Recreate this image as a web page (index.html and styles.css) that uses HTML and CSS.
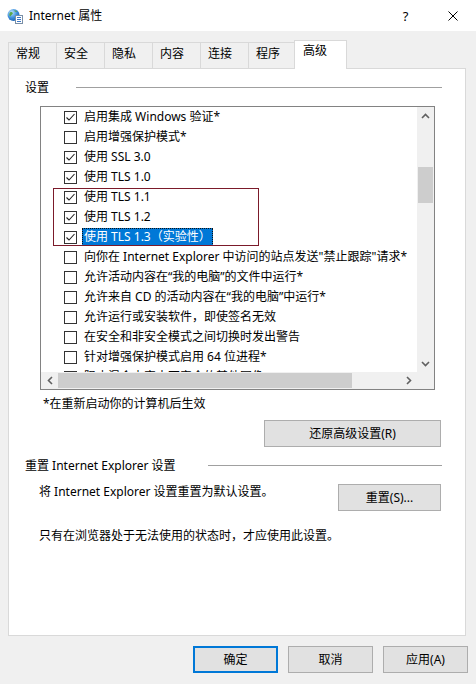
FILE: index.html
```html
<!DOCTYPE html>
<html lang="zh-CN">
<head>
<meta charset="utf-8">
<title>Internet 属性</title>
<link rel="stylesheet" href="styles.css">
</head>
<body>
<div class="window">
  <div class="titlebar">
    <svg class="app-icon" viewBox="0 0 16 16" width="16" height="16">
      <defs>
        <radialGradient id="g" cx="0.35" cy="0.3" r="0.8">
          <stop offset="0" stop-color="#bfe6ff"/>
          <stop offset="0.55" stop-color="#3d8fdc"/>
          <stop offset="1" stop-color="#1a5aa8"/>
        </radialGradient>
      </defs>
      <circle cx="6.5" cy="7" r="6" fill="url(#g)"/>
      <path d="M3 4.5c1.2-.8 2.4-.4 2.8.6.3.9-.6 1.4-1.3 1.9-.6.4-.5 1.4-1.4 1.3C2.3 8.1 1.8 6 3 4.5z" fill="#5aa84a"/>
      <path d="M7.5 2.2c1 .1 2.2.7 2.6 1.6-.6.4-1.6.2-2.1-.3-.4-.4-.8-.8-.5-1.3z" fill="#5aa84a"/>
      <rect x="8.5" y="7.5" width="7" height="8" fill="#fff" stroke="#7a8fa6" stroke-width="1"/>
      <path d="M10 9.5h4M10 11.5h4M10 13.5h4" stroke="#3c78c8" stroke-width="1"/>
    </svg>
    <span class="title">Internet 属性</span>
    <div class="caption-btns">
      <div class="cap-btn help">?</div>
      <div class="cap-btn close">
        <svg viewBox="0 0 10 10" width="10" height="10"><path d="M0.5 0.5L9.5 9.5M9.5 0.5L0.5 9.5" stroke="#000" stroke-width="1"/></svg>
      </div>
    </div>
  </div>

  <div class="tabs">
    <div class="tab">常规</div>
    <div class="tab">安全</div>
    <div class="tab">隐私</div>
    <div class="tab">内容</div>
    <div class="tab">连接</div>
    <div class="tab">程序</div>
    <div class="tab active">高级</div>
  </div>

  <div class="panel">
    <div class="group-head">
      <span>设置</span>
      <i class="rule rule-settings"></i>
    </div>

    <div class="listbox">
      <div class="list-view">
        <div class="item"><span class="cb"><svg viewBox="0 0 11 11" width="11" height="11"><path d="M1.5 5.5L4 8L9.5 2" fill="none" stroke="#222" stroke-width="1.1"/></svg></span><span class="label">启用集成 Windows 验证*</span></div>
        <div class="item"><span class="cb"></span><span class="label">启用增强保护模式*</span></div>
        <div class="item"><span class="cb"><svg viewBox="0 0 11 11" width="11" height="11"><path d="M1.5 5.5L4 8L9.5 2" fill="none" stroke="#222" stroke-width="1.1"/></svg></span><span class="label">使用 SSL 3.0</span></div>
        <div class="item"><span class="cb"><svg viewBox="0 0 11 11" width="11" height="11"><path d="M1.5 5.5L4 8L9.5 2" fill="none" stroke="#222" stroke-width="1.1"/></svg></span><span class="label">使用 TLS 1.0</span></div>
        <div class="item"><span class="cb"><svg viewBox="0 0 11 11" width="11" height="11"><path d="M1.5 5.5L4 8L9.5 2" fill="none" stroke="#222" stroke-width="1.1"/></svg></span><span class="label">使用 TLS 1.1</span></div>
        <div class="item"><span class="cb"><svg viewBox="0 0 11 11" width="11" height="11"><path d="M1.5 5.5L4 8L9.5 2" fill="none" stroke="#222" stroke-width="1.1"/></svg></span><span class="label">使用 TLS 1.2</span></div>
        <div class="item"><span class="cb"><svg viewBox="0 0 11 11" width="11" height="11"><path d="M1.5 5.5L4 8L9.5 2" fill="none" stroke="#222" stroke-width="1.1"/></svg></span><span class="label selected">使用 TLS 1.3（实验性）</span></div>
        <div class="item"><span class="cb"></span><span class="label">向你在 Internet Explorer 中访问的站点发送"禁止跟踪"请求*</span></div>
        <div class="item"><span class="cb"></span><span class="label">允许活动内容在“我的电脑”的文件中运行*</span></div>
        <div class="item"><span class="cb"></span><span class="label">允许来自 CD 的活动内容在“我的电脑”中运行*</span></div>
        <div class="item"><span class="cb"></span><span class="label">允许运行或安装软件，即使签名无效</span></div>
        <div class="item"><span class="cb"></span><span class="label">在安全和非安全模式之间切换时发出警告</span></div>
        <div class="item"><span class="cb"></span><span class="label">针对增强保护模式启用 64 位进程*</span></div>
        <div class="item"><span class="cb"></span><span class="label">阻止混合内容中不安全的其他图像</span></div>
        <div class="mark-frame"></div>
      </div>
      <div class="vscroll">
        <div class="arrow"><svg viewBox="0 0 9 6" width="9" height="6"><path d="M1 5L4.5 1.5L8 5" fill="none" stroke="#606060" stroke-width="1.6"/></svg></div>
        <div class="vtrack"><div class="vthumb"></div></div>
        <div class="arrow"><svg viewBox="0 0 9 6" width="9" height="6"><path d="M1 1L4.5 4.5L8 1" fill="none" stroke="#606060" stroke-width="1.6"/></svg></div>
      </div>
      <div class="hscroll">
        <div class="arrow"><svg viewBox="0 0 6 9" width="6" height="9"><path d="M5 1L1.5 4.5L5 8" fill="none" stroke="#606060" stroke-width="1.6"/></svg></div>
        <div class="hthumb"></div>
        <div class="htrack"></div>
        <div class="arrow"><svg viewBox="0 0 6 9" width="6" height="9"><path d="M1 1L4.5 4.5L1 8" fill="none" stroke="#606060" stroke-width="1.6"/></svg></div>
      </div>
      <div class="corner"></div>
    </div>

    <div class="note">*在重新启动你的计算机后生效</div>

    <button class="btn btn-restore">还原高级设置(R)</button>

    <div class="group-head group-reset">
      <span>重置 Internet Explorer 设置</span>
      <i class="rule rule-reset"></i>
    </div>

    <div class="reset-row">
      <span class="desc">将 Internet Explorer 设置重置为默认设置。</span>
      <button class="btn btn-reset">重置(S)...</button>
    </div>

    <div class="desc desc-last">只有在浏览器处于无法使用的状态时，才应使用此设置。</div>
  </div>

  <div class="footer">
    <button class="btn btn-foot default">确定</button>
    <button class="btn btn-foot">取消</button>
    <button class="btn btn-foot">应用(A)</button>
  </div>
</div>
</body>
</html>
```

FILE: styles.css
```css
* { box-sizing: border-box; }

html, body {
  margin: 0;
  padding: 0;
}

body {
  width: 476px;
  height: 684px;
  overflow: hidden;
  background: #f0f0f0;
  color: #000;
  font-family: "Noto Sans", "Noto Sans CJK SC", sans-serif;
  font-size: 12px;
  line-height: 16px;
}

.window {
  width: 476px;
  height: 684px;
  display: flex;
  flex-direction: column;
}

/* title bar */
.titlebar {
  height: 31px;
  flex-shrink: 0;
  background: #fff;
  display: flex;
  align-items: center;
}

.app-icon {
  margin-left: 7px;
  flex-shrink: 0;
}

.title {
  margin-left: 6px;
}

.caption-btns {
  margin-left: auto;
  display: flex;
  height: 31px;
}

.cap-btn {
  width: 46px;
  height: 31px;
  display: flex;
  align-items: center;
  justify-content: center;
}

.help {
  font-size: 13px;
  padding-right: 3px;
}

.close {
  padding-right: 1px;
}

/* tabs */
.tabs {
  margin-top: 9px;
  height: 28px;
  padding-left: 8px;
  display: flex;
  align-items: flex-end;
  flex-shrink: 0;
}

.tab {
  width: 49px;
  height: 26px;
  margin-left: -1px;
  padding: 3px 0 0 7px;
  border: 1px solid #d9d9d9;
  border-bottom: none;
  background: #f0f0f0;
  white-space: nowrap;
}

.tab:first-child {
  margin-left: 0;
}

.tab.active {
  position: relative;
  z-index: 1;
  width: 53px;
  height: 29px;
  margin-left: -3px;
  margin-bottom: -1px;
  padding: 2px 0 0 8px;
  background: #fff;
}

/* panel */
.panel {
  margin-left: 8px;
  width: 458px;
  height: 568px;
  flex-shrink: 0;
  background: #fff;
  border: 1px solid #d9d9d9;
  padding: 0 23px 0 16px;
  display: flex;
  flex-direction: column;
}

.group-head {
  margin-top: 11px;
  height: 16px;
  display: flex;
  align-items: center;
  white-space: nowrap;
}

.rule {
  flex: 1;
  height: 1px;
  background: #a0a0a0;
  margin-top: -1px;
}

.rule-settings { margin-left: 27px; }
.rule-reset { margin-left: 32px; }

/* list box */
.listbox {
  margin-top: 10px;
  margin-left: 15px;
  width: 395px;
  height: 284px;
  border: 1px solid #828282;
  display: grid;
  grid-template-columns: 376px 17px;
  grid-template-rows: 265px 17px;
}

.list-view {
  position: relative;
  overflow: hidden;
}

.item {
  height: 20px;
  display: flex;
  align-items: center;
  white-space: nowrap;
}

.cb {
  width: 13px;
  height: 13px;
  margin-left: 23px;
  flex-shrink: 0;
  border: 1px solid #333;
  background: #fff;
  display: flex;
}

.label {
  margin-left: 5px;
  padding: 0 2px;
  line-height: 18px;
  height: 18px;
}

.label.selected {
  background: #0078d7;
  color: #fff;
  outline: 1px dotted #111;
  outline-offset: -1px;
}

.mark-frame {
  position: absolute;
  left: 12px;
  top: 81px;
  width: 206px;
  height: 58px;
  border: 1px solid #7b1a2a;
  pointer-events: none;
}

.vscroll {
  background: #f0f0f0;
  display: flex;
  flex-direction: column;
}

.vscroll .arrow {
  height: 17px;
}

.arrow {
  flex-shrink: 0;
  display: flex;
  align-items: center;
  justify-content: center;
}

.vtrack {
  flex: 1;
  padding-top: 43px;
}

.vthumb {
  height: 36px;
  margin: 0 1px;
  background: #cdcdcd;
}

.hscroll {
  background: #f0f0f0;
  display: flex;
}

.hscroll .arrow {
  width: 17px;
}

.hthumb {
  width: 294px;
  margin: 1px 0;
  background: #cdcdcd;
}

.htrack {
  flex: 1;
}

.corner {
  background: #f0f0f0;
}

.note {
  margin-top: 6px;
  margin-left: 18px;
}

/* buttons */
.btn {
  font: inherit;
  color: #000;
  background: #e1e1e1;
  border: 1px solid #adadad;
  border-radius: 0;
  padding: 0;
  height: 27px;
  line-height: 16px;
  text-align: center;
}

.btn-restore {
  margin-top: 8px;
  align-self: flex-end;
  margin-right: 1px;
  width: 177px;
}

.group-reset {
  margin-top: 11px;
}

.reset-row {
  margin-top: 10px;
  display: flex;
  align-items: flex-start;
  justify-content: space-between;
}

.desc {
  margin-left: 14px;
}

.btn-reset {
  width: 103px;
  margin-right: 1px;
}

.desc-last {
  margin-top: 17px;
}

.footer {
  margin-top: 10px;
  padding-right: 8px;
  display: flex;
  justify-content: flex-end;
  gap: 10px;
}

.btn-foot {
  width: 85px;
}

.btn-foot.default {
  border-color: #0078d7;
  box-shadow: inset 0 0 0 1px #0078d7;
}
```
